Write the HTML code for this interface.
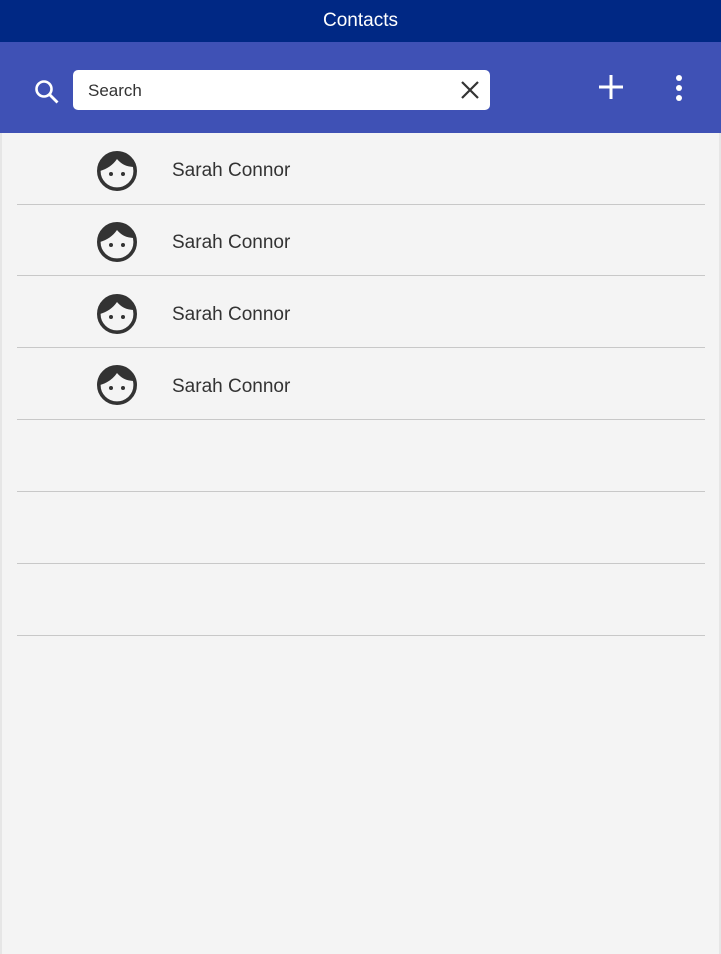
<!DOCTYPE html>
<html><head><meta charset="utf-8"><style>
*{margin:0;padding:0;box-sizing:border-box}
body{width:721px;height:954px;background:#f4f4f4;font-family:"Liberation Sans",sans-serif;position:relative;overflow:hidden}
.title{position:absolute;left:0;top:0;width:721px;height:42px;background:#002884;color:#fff;font-size:19px;text-align:center;line-height:41px}
.bar{position:absolute;left:0;top:42px;width:721px;height:91px;background:#3f51b5}
.search{position:absolute;left:73px;top:70px;width:417px;height:40px;background:#fff;border-radius:5px;font-size:17px;color:#333;line-height:41px;padding-left:15px}
.row{position:absolute;left:17px;width:688px;height:1px;background:#c8c8c8}
.name{position:absolute;left:172px;font-size:19px;color:#333}
.face{position:absolute;left:96px}
.lb{position:absolute;left:0;top:133px;width:2px;height:821px;background:#e6e6e6}
.rb{position:absolute;right:0;top:133px;width:2px;height:821px;background:#e6e6e6}
</style></head><body>
<div class="title">Contacts</div>
<div class="bar"></div>
<svg style="position:absolute;left:33px;top:78px" width="28" height="28" viewBox="0 0 28 28"><circle cx="11" cy="11" r="7.5" fill="none" stroke="#fff" stroke-width="2.6"/><line x1="16.5" y1="16.5" x2="24.5" y2="24.5" stroke="#fff" stroke-width="2.8"/></svg>
<div class="search">Search</div>
<svg style="position:absolute;left:460px;top:80px" width="20" height="20" viewBox="0 0 20 20"><path d="M2 2L18 18M18 2L2 18" stroke="#333" stroke-width="2.2"/></svg>
<svg style="position:absolute;left:598px;top:74px" width="26" height="26" viewBox="0 0 26 26"><path d="M13 1V25M1 13H25" stroke="#fff" stroke-width="3"/></svg>
<svg style="position:absolute;left:672px;top:74px" width="14" height="28" viewBox="0 0 14 28"><circle cx="7" cy="4" r="3" fill="#fff"/><circle cx="7" cy="14" r="3" fill="#fff"/><circle cx="7" cy="24" r="3" fill="#fff"/></svg>
<div class="lb"></div><div class="rb"></div>

<svg class="face" style="top:150px" width="42" height="42" viewBox="0 0 42 42"><circle cx="21" cy="21" r="18.2" fill="none" stroke="#333" stroke-width="3.6"/><path d="M4 21A17 17 0 0 1 38 17C31 17 25 14 21 9C17 15 11 19 4 21Z" fill="#333"/><circle cx="15" cy="24" r="2" fill="#333"/><circle cx="27" cy="24" r="2" fill="#333"/></svg>
<div class="name" style="top:160px">Sarah Connor</div>
<div class="row" style="top:204px"></div>

<svg class="face" style="top:221px" width="42" height="42" viewBox="0 0 42 42"><circle cx="21" cy="21" r="18.2" fill="none" stroke="#333" stroke-width="3.6"/><path d="M4 21A17 17 0 0 1 38 17C31 17 25 14 21 9C17 15 11 19 4 21Z" fill="#333"/><circle cx="15" cy="24" r="2" fill="#333"/><circle cx="27" cy="24" r="2" fill="#333"/></svg>
<div class="name" style="top:232px">Sarah Connor</div>
<div class="row" style="top:275px"></div>

<svg class="face" style="top:293px" width="42" height="42" viewBox="0 0 42 42"><circle cx="21" cy="21" r="18.2" fill="none" stroke="#333" stroke-width="3.6"/><path d="M4 21A17 17 0 0 1 38 17C31 17 25 14 21 9C17 15 11 19 4 21Z" fill="#333"/><circle cx="15" cy="24" r="2" fill="#333"/><circle cx="27" cy="24" r="2" fill="#333"/></svg>
<div class="name" style="top:304px">Sarah Connor</div>
<div class="row" style="top:347px"></div>

<svg class="face" style="top:364px" width="42" height="42" viewBox="0 0 42 42"><circle cx="21" cy="21" r="18.2" fill="none" stroke="#333" stroke-width="3.6"/><path d="M4 21A17 17 0 0 1 38 17C31 17 25 14 21 9C17 15 11 19 4 21Z" fill="#333"/><circle cx="15" cy="24" r="2" fill="#333"/><circle cx="27" cy="24" r="2" fill="#333"/></svg>
<div class="name" style="top:376px">Sarah Connor</div>
<div class="row" style="top:419px"></div>

<div class="row" style="top:491px"></div>
<div class="row" style="top:563px"></div>
<div class="row" style="top:635px"></div>
</body></html>
